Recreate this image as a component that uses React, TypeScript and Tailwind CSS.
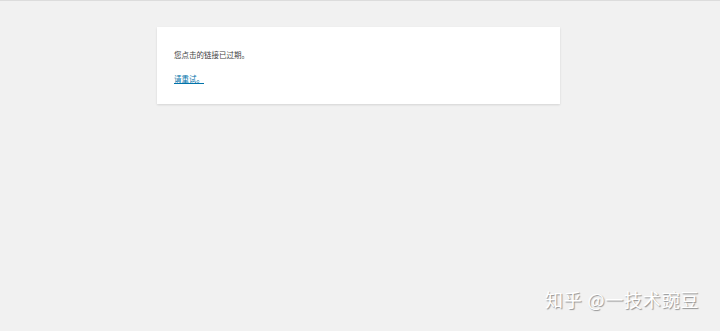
export default function App() {
  return (
    <div
      className="w-[720px] h-[331px] bg-[#f1f1f1] border-t border-[#dcdcdc] relative overflow-hidden"
      style={{ fontFamily: '"Noto Sans CJK SC", "Noto Sans", sans-serif' }}
    >
      <div className="ml-[157px] mt-[26px] w-[403px] h-[77px] bg-white shadow-[0_1px_2px_rgba(0,0,0,0.12)] px-[17px] pt-[23px]">
        <p className="text-[7.5px] leading-[10px] text-[#444]">您点击的链接已过期。</p>
        <p className="mt-[14px] text-[7.5px] leading-[10px]">
          <a href="#" className="text-[#0073aa] underline">请重试。</a>
        </p>
      </div>
      <div
        className="absolute left-[545px] top-[286px] text-[18px] leading-[24px] text-white tracking-[0.8px]"
        style={{ textShadow: '1px 1px 1px rgba(0,0,0,0.4)' }}
      >
        知乎 @一技术豌豆
      </div>
    </div>
  );
}
